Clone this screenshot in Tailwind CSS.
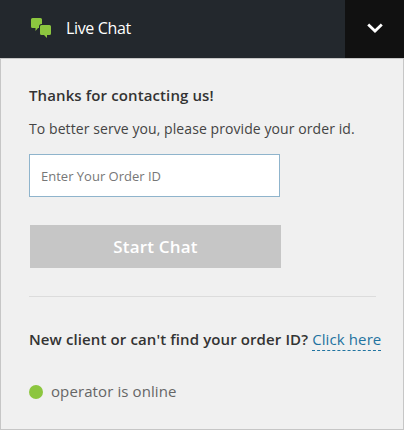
<!DOCTYPE html>
<html lang="en">
<head>
<meta charset="utf-8">
<title>Live Chat</title>
<script src="https://cdn.jsdelivr.net/npm/@tailwindcss/browser@4"></script>
</head>
<body class="w-[404px] h-[430px] overflow-hidden font-['Open_Sans',sans-serif] bg-[#f0f0f0]">
<div class="flex flex-col h-[430px]">
  <header class="flex h-[58px] shrink-0 bg-[#23282d] text-white">
    <div class="flex flex-1 items-center pl-[31px] pb-[2px]">
      <svg class="w-[21px] h-[20px] shrink-0" viewBox="0 0 21 20" fill="#8cc63f">
        <path d="M1.500 0H9.500Q11 0 11 1.500V6H10.500Q8 6 8 8.500V10H7L4.500 13V10H1.500Q0 10 0 8.500V1.500Q0 0 1.500 0Z"/>
        <path d="M10.500 7H18.500Q20 7 20 8.500V15.500Q20 17 18.500 17H16V20L13 17H10.500Q9 17 9 15.500V8.500Q9 7 10.500 7Z"/>
      </svg>
      <h1 class="ml-[14px] text-[16px] leading-[22px] tracking-[-0.35px] whitespace-nowrap">Live Chat</h1>
    </div>
    <button class="flex w-[59px] items-center justify-center bg-[#111] pb-[2px]" aria-label="Minimize">
      <svg class="w-[16px] h-[10px]" viewBox="0 0 16 10" fill="none" stroke="#fff" stroke-width="2.800"><path d="M1.200 1.500L8 8L14.800 1.500"/></svg>
    </button>
  </header>
  <main class="flex-1 border border-[#c6c6c6] pl-[28px] pt-[25px] text-[#333]">
    <h2 class="text-[15px] leading-[22px] font-semibold tracking-[0.11px] whitespace-nowrap">Thanks for contacting us!</h2>
    <p class="mt-[12px] text-[14px] leading-[22px] tracking-[0.08px] text-[#444] whitespace-nowrap">To better serve you, please provide your order id.</p>
    <input class="mt-[14px] block w-[251px] h-[43px] border border-[#8fb4cc] bg-white px-[11px] text-[13px] placeholder:text-[#777]" placeholder="Enter Your Order ID">
    <button class="mt-[28px] ml-px block w-[251px] h-[43px] bg-[#c6c6c6] text-[17px] font-semibold tracking-[0.2px] text-white">Start Chat</button>
    <hr class="mt-[28px] w-[347px] border-t border-[#dcdcdc]">
    <p class="mt-[31px] h-[22px] text-[15px] leading-[22px] font-semibold tracking-[0.11px] whitespace-nowrap">New client or can't find your order ID? <a class="inline-block h-[23px] border-b border-dashed border-[#1f73a0] font-normal text-[#1f73a0]">Click here</a></p>
    <div class="mt-[30px] flex items-center text-[15px] leading-[22px] tracking-[0.1px] text-[#666]">
      <span class="mt-px w-[14px] h-[14px] rounded-full bg-[#8cc63f]"></span>
      <span class="ml-[8px]">operator is online</span>
    </div>
  </main>
</div>
</body>
</html>
